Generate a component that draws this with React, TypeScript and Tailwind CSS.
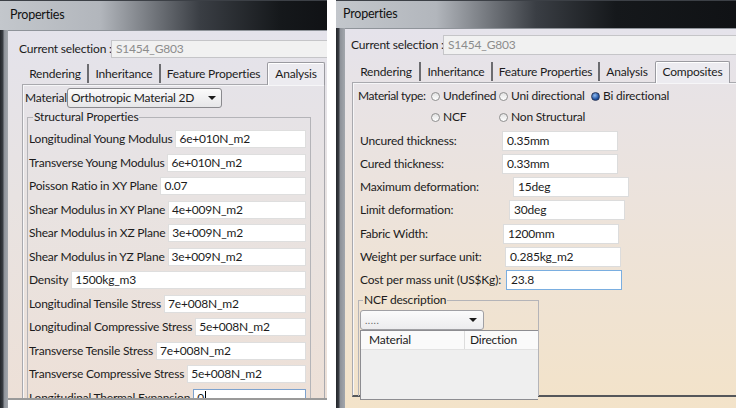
import React from "react";

const leftRows: [string, string][] = [
  ["Longitudinal Young Modulus", "6e+010N_m2"],
  ["Transverse Young Modulus", "6e+010N_m2"],
  ["Poisson Ratio in XY Plane", "0.07"],
  ["Shear Modulus in XY Plane", "4e+009N_m2"],
  ["Shear Modulus in XZ Plane", "3e+009N_m2"],
  ["Shear Modulus in YZ Plane", "3e+009N_m2"],
  ["Density", "1500kg_m3"],
  ["Longitudinal Tensile Stress", "7e+008N_m2"],
  ["Longitudinal Compressive Stress", "5e+008N_m2"],
  ["Transverse Tensile Stress", "7e+008N_m2"],
  ["Transverse Compressive Stress", "5e+008N_m2"],
  ["Longitudinal Thermal Expansion", "0"],
];

// label width decides where the field starts, as in the original dialog
const rightRows: { label: string; value: string; lw: string; focus?: boolean }[] = [
  { label: "Uncured thickness:", value: "0.35mm", lw: "w-[142px]" },
  { label: "Cured thickness:", value: "0.33mm", lw: "w-[142px]" },
  { label: "Maximum deformation:", value: "15deg", lw: "w-[153px]" },
  { label: "Limit deformation:", value: "30deg", lw: "w-[149px]" },
  { label: "Fabric Width:", value: "1200mm", lw: "w-[143px]" },
  { label: "Weight per surface unit:", value: "0.285kg_m2", lw: "w-[145px]" },
  { label: "Cost per mass unit (US$Kg):", value: "23.8", lw: "w-[146px]", focus: true },
];

const TitleBar = ({ tall }: { tall: boolean }) => (
  <div
    className={`flex items-center border-t border-[#3c4046] text-[12.5px] text-[#111] ${
      tall ? "h-[30px] pl-[10px]" : "h-[28px] pl-[7px]"
    } bg-[linear-gradient(to_right,#c3c7cc_0px,#b2b6bc_100px,#3a3e44_200px,#15181b_280px,#101215_100%)]`}
  >
    Properties
  </div>
);

const Frame = ({ w }: { w: string }) => (
  <div className={`${w} shrink-0 self-stretch bg-[linear-gradient(to_right,#23262a_0px,#3b3f45_3px,#8d9198_4px,#a3a7ad_100%)]`} />
);

const Arrow = () => (
  <span className="w-0 h-0 border-l-[4px] border-r-[4px] border-t-[4px] border-l-transparent border-r-transparent border-t-[#1a1a1a]" />
);

const Radio = ({ on }: { on?: boolean }) =>
  on ? (
    <span className="w-[9px] h-[9px] shrink-0 rounded-full border border-[#27365a] bg-[radial-gradient(circle_at_40%_35%,#8fbaf0,#1c4f9e_65%)]" />
  ) : (
    <span className="w-[9px] h-[9px] shrink-0 rounded-full border border-[#8e8e8e] bg-[linear-gradient(#e2e2e2,#ffffff)]" />
  );

type Tab = { label: string; w: string; active?: boolean };

const Tabs = ({ tabs, h }: { tabs: Tab[]; h: string }) => (
  <div className={`flex items-end ${h}`}>
    {tabs.map((t, i) => {
      const next = tabs[i + 1];
      const sep = !t.active && next && !next.active;
      return (
        <React.Fragment key={t.label}>
          {t.active ? (
            <div
              className={`${t.w} h-full flex items-center justify-center border border-b-0 border-[#9a9aa0] rounded-t-[2px] bg-[#ecebf0] relative z-10 -mb-px pb-px shadow-[inset_1px_1px_0_#ffffff]`}
            >
              {t.label}
            </div>
          ) : (
            <div className={`${t.w} h-full flex items-center justify-center pt-[2px]`}>{t.label}</div>
          )}
          {sep && <div className="w-[2px] h-[19px] mb-[1px] bg-[#6c6c70] -mx-px" />}
        </React.Fragment>
      );
    })}
  </div>
);

const LeftPanel = () => (
  <div className="w-[327px] h-[408px] flex flex-col bg-white">
    <TitleBar tall />
    <div className="flex flex-1">
      <Frame w="w-[8px]" />
      <div className="flex-1 flex flex-col">
        <div className="h-[370px] overflow-hidden border-t border-[#8f949a] border-b-2 border-b-[#9a9a9a] bg-[linear-gradient(to_bottom,#e4e3eb,#e8e3e2_45%,#ede0d7)]">
          <div className="flex items-center h-[18px] mt-[9px]">
            <span className="pl-[11px] w-[103px] shrink-0">Current selection :</span>
            <div className="flex-1 h-full flex items-center pl-[4px] bg-[#f1f1f1] border border-r-0 border-[#c5c5c8] text-[#8c8c8c]">
              S1454_G803
            </div>
          </div>
          <div className="ml-[14px] mt-[3px]">
            <Tabs
              h="h-[23px]"
              tabs={[
                { label: "Rendering", w: "w-[66px]" },
                { label: "Inheritance", w: "w-[72px]" },
                { label: "Feature Properties", w: "w-[107px]" },
                { label: "Analysis", w: "w-[58px]", active: true },
              ]}
            />
            <div className="w-[303px] border-t border-l border-r border-[#a9a9ae] shadow-[inset_1px_1px_0_#f6f6f8] pt-[3px] pl-[2px]">
              <div className="flex items-center h-[20px]">
                <span className="w-[42px] shrink-0">Material</span>
                <div className="w-[155px] h-full flex items-center justify-between pl-[3px] pr-[5px] rounded-[3px] border border-[#8a8a8e] bg-[linear-gradient(#fbfbfb,#e6e6e8)]">
                  <span>Orthotropic Material 2D</span>
                  <Arrow />
                </div>
              </div>
              <div className="relative mt-[9px] ml-[2px] w-[284px] border-t border-l border-r border-[#b4b4b8] pt-[12px] pl-[1px] pr-[4px]">
                <span className="absolute -top-[9px] left-[5px] px-[1px] leading-[16px] bg-[#e6e3e7]">
                  Structural Properties
                </span>
                <div className="flex flex-col gap-[5.5px]">
                  {leftRows.map(([l, v], i) => {
                    const last = i === leftRows.length - 1;
                    return (
                      <div key={l} className="flex items-center h-[18px]">
                        <span className="pr-[3px]">{l}</span>
                        <div
                          className={`flex-1 h-full flex items-center pl-[3px] bg-white border ${
                            last ? "border-[#7da2ce]" : "border-[#dedede]"
                          }`}
                        >
                          {v}
                          {last && <span className="w-px h-[13px] bg-black ml-[1px]" />}
                        </div>
                      </div>
                    );
                  })}
                </div>
              </div>
            </div>
          </div>
        </div>
      </div>
    </div>
  </div>
);

const RightPanel = () => (
  <div className="w-[400px] h-[408px] flex flex-col">
    <TitleBar tall={false} />
    <div className="flex flex-1">
      <Frame w="w-[9px]" />
      <div className="flex-1 flex flex-col border-t border-[#8f949a] bg-[linear-gradient(to_bottom,#e5e3eb,#ece3dc_45%,#f3e3c9)]">
        <div className="flex items-center h-[20px] mt-[6px]">
          <span className="pl-[6px] w-[98px] shrink-0">Current selection :</span>
          <div className="flex-1 h-full flex items-center pl-[4px] bg-[#f1f1f1] border border-r-0 border-[#c5c5c8] text-[#8c8c8c]">
            S1454_G803
          </div>
        </div>
        <div className="ml-[7px] mt-[5px] flex-1 flex flex-col">
          <Tabs
            h="h-[22px]"
            tabs={[
              { label: "Rendering", w: "w-[68px]" },
              { label: "Inheritance", w: "w-[72px]" },
              { label: "Feature Properties", w: "w-[107px]" },
              { label: "Analysis", w: "w-[56px]" },
              { label: "Composites", w: "w-[75px]", active: true },
            ]}
          />
          <div className="h-[315px] border-t border-l border-[#a9a9ae] border-b-2 border-b-[#55575a] shadow-[inset_1px_1px_0_#f6f6f8] pl-[5px] pt-[4px]">
            <div className="flex items-center h-[18px]">
              <span className="w-[73px] shrink-0 tracking-[-0.4px]">Material type:</span>
              <span className="flex items-center gap-[3px] w-[68px] shrink-0">
                <Radio />
                Undefined
              </span>
              <span className="flex items-center gap-[3px] w-[92px] shrink-0">
                <Radio />
                Uni directional
              </span>
              <span className="flex items-center gap-[3px]">
                <Radio on />
                Bi directional
              </span>
            </div>
            <div className="flex items-center h-[18px] mt-[3px] pl-[73px]">
              <span className="flex items-center gap-[3px] w-[68px] shrink-0">
                <Radio />
                NCF
              </span>
              <span className="flex items-center gap-[3px]">
                <Radio />
                Non Structural
              </span>
            </div>
            <div className="mt-[5px] flex flex-col">
              {rightRows.map((r) => (
                <div key={r.label} className="flex h-[23.17px] pl-[2px]">
                  <span className={`${r.lw} shrink-0 h-[20px] flex items-center`}>{r.label}</span>
                  <div
                    className={`w-[116px] h-[20px] flex items-center pl-[4px] bg-white border ${
                      r.focus ? "border-[#7aaee0]" : "border-[#dcdcdc]"
                    }`}
                  >
                    {r.value}
                  </div>
                </div>
              ))}
            </div>
            <div className="relative mt-[7px] w-[181px] h-[96px] border-t border-l border-r border-[#b4b4b8] pt-[9px] pl-[1px]">
              <span className="absolute -top-[9px] left-[4px] px-[1px] leading-[16px] bg-[#f1e4d2]">NCF description</span>
              <div className="w-[124px] h-[20px] flex items-center justify-between pl-[4px] pr-[6px] rounded-[3px] border border-[#a0a0a4] bg-[linear-gradient(#fbfbfb,#ececee)]">
                <span className="text-[10px] tracking-[0.5px] text-[#666] leading-none -mt-[1px]">.....</span>
                <Arrow />
              </div>
              <div className="h-[70px] border border-r-0 border-[#8d8d91] bg-[#efefef]">
                <div className="flex h-[19px] bg-[#fafafa] border-b border-[#e2e2e2]">
                  <span className="w-[104px] pl-[8px] flex items-center border-r border-[#dcdcdc]">Material</span>
                  <span className="pl-[5px] flex items-center">Direction</span>
                </div>
              </div>
            </div>
          </div>
        </div>
      </div>
    </div>
  </div>
);

export default function App() {
  return (
    <div className="w-[736px] h-[408px] flex gap-[9px] bg-white overflow-hidden whitespace-nowrap font-['Lato',sans-serif] text-[12px] tracking-[-0.2px] text-[#1c1c1c] leading-none">
      <LeftPanel />
      <RightPanel />
    </div>
  );
}
